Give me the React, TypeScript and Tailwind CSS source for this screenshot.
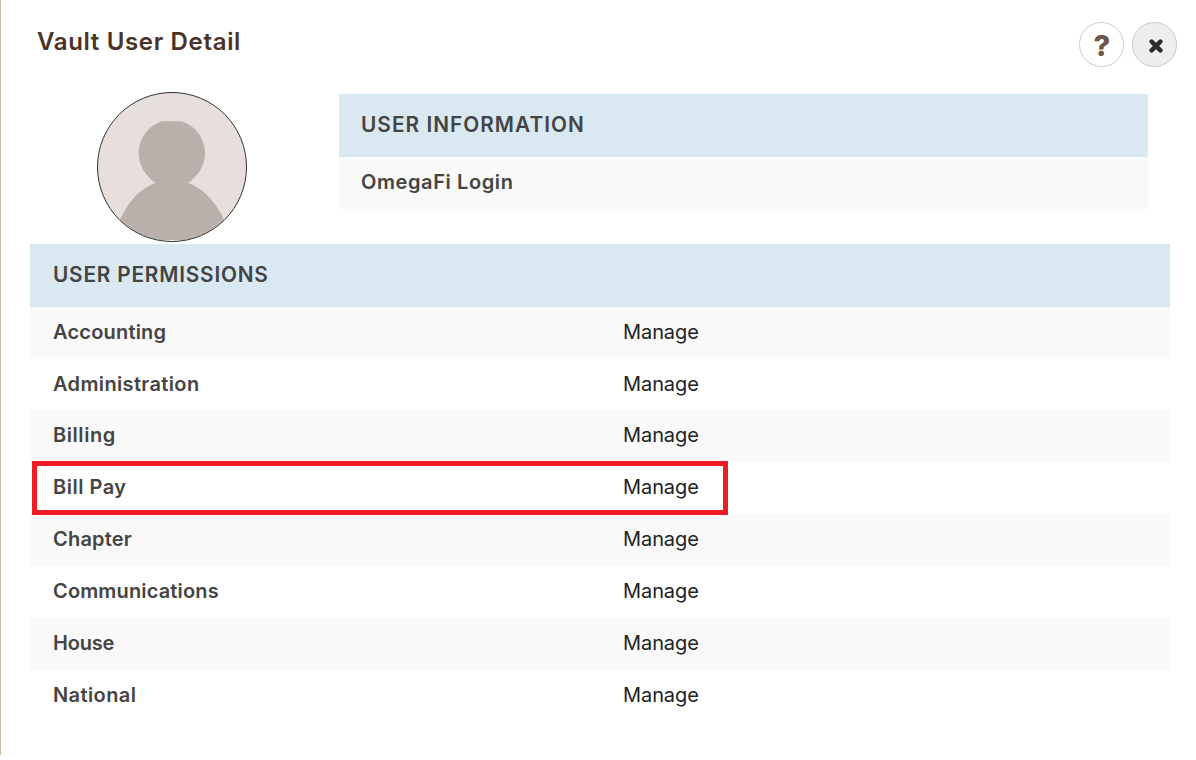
import { FC, ReactNode } from "react";

type RowProps = {
  label: string;
  tracking: string;
  value?: string;
  highlighted?: boolean;
};

const permissions: RowProps[] = [
  { label: "Accounting", tracking: "tracking-[0.2px]", value: "Manage" },
  { label: "Administration", tracking: "tracking-[0.36px]", value: "Manage" },
  { label: "Billing", tracking: "tracking-[0.57px]", value: "Manage" },
  { label: "Bill Pay", tracking: "tracking-[0.5px]", value: "Manage", highlighted: true },
  { label: "Chapter", tracking: "tracking-[0.2px]", value: "Manage" },
  { label: "Communications", tracking: "tracking-[0.15px]", value: "Manage" },
  { label: "House", tracking: "tracking-[-0.2px]", value: "Manage" },
  { label: "National", tracking: "tracking-[0.4px]", value: "Manage" },
];

const Avatar: FC = () => (
  <svg className="h-[150px] w-[150px]" viewBox="0 0 150 150">
    <defs>
      <clipPath id="avatar">
        <circle cx="75" cy="75" r="74" />
      </clipPath>
    </defs>
    <circle cx="75" cy="75" r="74.5" fill="#e6dfdc" />
    <g clipPath="url(#avatar)" fill="#b9b0ac">
      <path d="M65 29.3H84.6A33.2 33.2 0 0 1 99.5 83.2Q95.5 88 91 91L95 96H54L58.5 91Q54 88 50.1 83.2A33.2 33.2 0 0 1 65 29.3Z" />
      <path d="M15 150C23 120 38 98 58.5 91H91C111.500 98 127 120 135 150Z" />
      <path d="M40 148H110V150H40Z" fill="#ffffff" />
    </g>
    <circle cx="75" cy="75" r="74.5" fill="none" stroke="#333333" />
  </svg>
);

const Heading: FC<{ children: ReactNode; className: string }> = ({ children, className }) => (
  <h3 className={`flex h-[62.7px] items-center bg-[#dae8f2] pb-[1.2px] text-[20.8px] font-semibold ${className}`}>
    {children}
  </h3>
);

const Row: FC<RowProps> = ({ label, tracking, value, highlighted }) => (
  <div className="relative grid h-[51.86px] grid-cols-2 items-center pb-[1.84px] pl-[23px] odd:bg-[#f9f9f9]">
    <span className={`font-semibold ${tracking}`}>{label}</span>
    {value && <span className="ml-[11.5px] tracking-[-0.08px] text-[#222222]">{value}</span>}
    {highlighted && (
      <div className="absolute -top-px left-[2px] z-10 h-[54px] w-[696px] border-[5px] border-[#ee1c25]" />
    )}
  </div>
);

const App: FC = () => {
  return (
    <div className="h-[760px] w-[1196px] overflow-hidden bg-white font-['Inter',sans-serif] text-[20px] text-[#444444]">
      <div className="h-[755px] border-l border-[#c8bb96]">
        <header className="flex h-[92px] justify-between pl-[36px] pr-[19px]">
          <h1 className="mt-[24px] text-2xl leading-9 font-semibold tracking-[0.66px] text-[#4b3228]">
            Vault User Detail
          </h1>
          <div className="mt-[22px] flex gap-2">
            <button className="flex size-[45px] items-center justify-center rounded-full border border-[#cccccc] pt-[2px] pl-px text-[29px] font-extrabold text-[#6d5549]">
              ?
            </button>
            <button className="flex size-[45px] items-center justify-center rounded-full border border-[#c8c8c8] bg-[#eeeeee]">
              <svg className="mt-[2px] ml-[2px] size-[14px]" viewBox="0 0 14 14" fill="none" stroke="#2b2b2b">
                <path d="M2.6 2.6L11.4 11.4M11.4 2.6L2.6 11.4" strokeWidth="4.4" strokeLinecap="round" />
              </svg>
            </button>
          </div>
        </header>
        <div className="flex h-[152px] pl-[96px]">
          <Avatar />
          <section className="mt-[2px] ml-[92px] w-[809px]">
            <Heading className="pl-[22px] tracking-[1.03px]">USER INFORMATION</Heading>
            <div>
              <Row label="OmegaFi Login" tracking="tracking-[0.6px] -ml-px whitespace-nowrap" />
            </div>
          </section>
        </div>
        <section className="ml-[29px] w-[1140px]">
          <Heading className="pl-[23px] tracking-[0.8px]">USER PERMISSIONS</Heading>
          <div>
            {permissions.map((permission) => (
              <Row key={permission.label} {...permission} />
            ))}
          </div>
        </section>
      </div>
    </div>
  );
};

export default App;
